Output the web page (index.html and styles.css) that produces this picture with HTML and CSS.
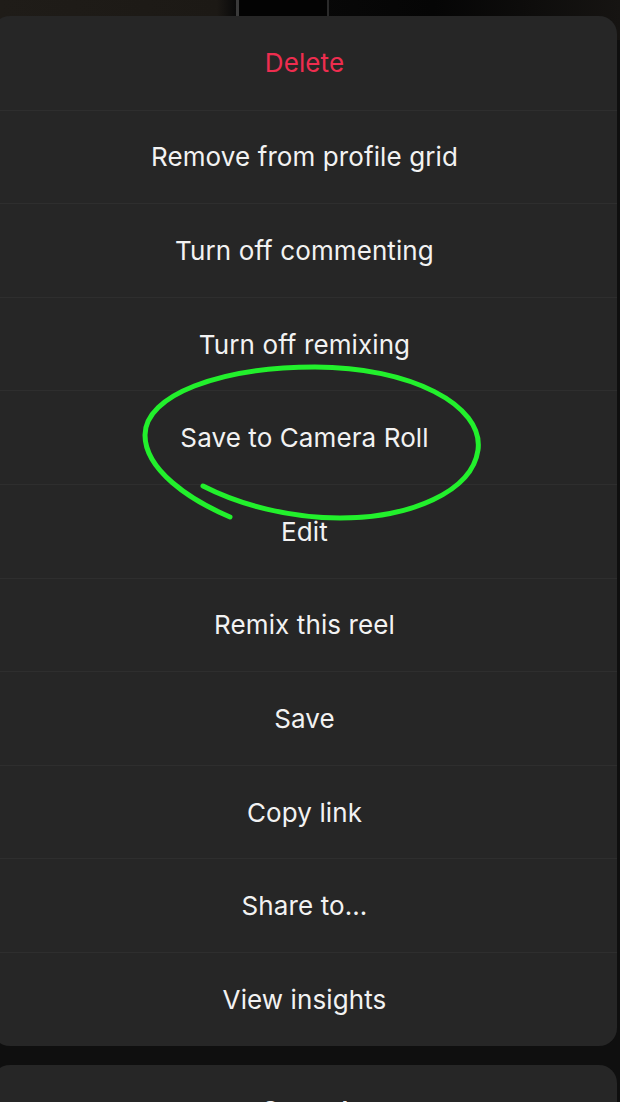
FILE: index.html
```html
<!DOCTYPE html>
<html lang="en">

<head>
    <meta charset="UTF-8" />
    <title>Reel options</title>
    <link rel="stylesheet" href="styles.css">
</head>

<body>

    <div class="backdrop">
        <div class="backdrop-phone"></div>
    </div>

    <div class="sheet">
        <div class="sheet-item danger">Delete</div>
        <div class="sheet-item">Remove from profile grid</div>
        <div class="sheet-item">Turn off commenting</div>
        <div class="sheet-item">Turn off remixing</div>
        <div class="sheet-item">Save to Camera Roll</div>
        <div class="sheet-item">Edit</div>
        <div class="sheet-item">Remix this reel</div>
        <div class="sheet-item">Save</div>
        <div class="sheet-item">Copy link</div>
        <div class="sheet-item">Share to...</div>
        <div class="sheet-item">View insights</div>

        <!-- hand drawn circle round "Save to Camera Roll" -->
        <svg class="scribble" width="620" height="1102" viewBox="0 0 620 1102">
            <path d="M203,486 C240,505 290,518 340,518 C410,518 472,492 478,450 C484,405 410,367 315,367 C220,367 145,395 145,435 C145,470 190,500 230,517"
                fill="none" stroke="#22f02c" stroke-width="5" stroke-linecap="round" />
        </svg>
    </div>

    <div class="sheet cancel">
        <div class="sheet-item">Cancel</div>
    </div>

</body>

</html>
```

FILE: styles.css
```css
html,
body {
    margin: 0;
    height: 100%;
    overflow: hidden;
}

body {
    background-color: #0f0f0f;
    font-family: 'Inter', 'Roboto', sans-serif;
    padding-top: 16px;
    box-sizing: border-box;
}

/* 後ろの動画の端っこ */
.backdrop {
    position: absolute;
    top: 0;
    left: 0;
    right: 0;
    height: 40px;
    background: linear-gradient(90deg, #1f1c18 0%, #1c1915 35%, #0a0a0a 38%, #050505 70%, #161412 100%);
}

.backdrop-phone {
    position: absolute;
    top: 0;
    left: 236px;
    width: 88px;
    height: 40px;
    background-color: #030303;
    border-left: 3px solid #3a3a3a;
    border-right: 2px solid #2a2a2a;
}

.sheet {
    position: relative;
    margin-left: -8px;
    width: 625px;
    background-color: #262626;
    border-radius: 18px;
    overflow: hidden;
}

.sheet-item {
    height: 93.6px;
    box-sizing: border-box;
    display: flex;
    align-items: center;
    justify-content: center;
    color: #f2f2f2;
    font-size: 26px;
    letter-spacing: 0.1px;
}

.sheet-item + .sheet-item {
    border-top: 1px solid #2e2e2e;
}

.danger {
    color: #ee2d4f;
}

.cancel {
    margin-top: 19px;
}

.cancel .sheet-item {
    height: 92px;
    font-weight: 600;
}

.scribble {
    position: absolute;
    top: -16px;
    left: 8px;
    pointer-events: none;
}
```
